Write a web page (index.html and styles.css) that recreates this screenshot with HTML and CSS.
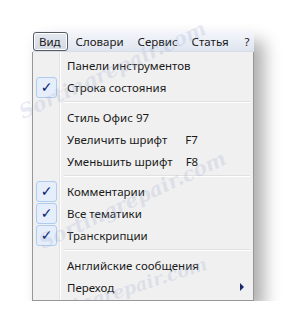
FILE: index.html
```html
<!DOCTYPE html>
<html lang="ru">
<head>
  <meta charset="UTF-8" />
  <title>Меню Вид</title>
  <link rel="stylesheet" href="styles.css">
</head>
<body>
  <div class="window">
    <div class="menubar">
      <span class="top-item active">Вид</span>
      <span class="top-item">Словари</span>
      <span class="top-item">Сервис</span>
      <span class="top-item">Статья</span>
      <span class="top-item">?</span>
    </div>

    <div class="dropdown">
      <div class="item"><span class="gutter"></span><span class="label">Панели инструментов</span></div>
      <div class="item"><span class="gutter"><span class="check">&#10003;</span></span><span class="label">Строка состояния</span></div>
      <div class="sep"></div>
      <div class="item"><span class="gutter"></span><span class="label">Стиль Офис 97</span></div>
      <div class="item"><span class="gutter"></span><span class="label">Увеличить шрифт</span><span class="key k7">F7</span></div>
      <div class="item"><span class="gutter"></span><span class="label">Уменьшить шрифт</span><span class="key k8">F8</span></div>
      <div class="sep"></div>
      <div class="item"><span class="gutter"><span class="check">&#10003;</span></span><span class="label">Комментарии</span></div>
      <div class="item"><span class="gutter"><span class="check">&#10003;</span></span><span class="label">Все тематики</span></div>
      <div class="item"><span class="gutter"><span class="check">&#10003;</span></span><span class="label">Транскрипции</span></div>
      <div class="sep"></div>
      <div class="item"><span class="gutter"></span><span class="label">Английские сообщения</span></div>
      <div class="item"><span class="gutter"></span><span class="label">Переход</span>
        <svg class="arrow" width="5" height="8" viewBox="0 0 5 8"><path d="M0 0 L4 4 L0 8 Z" fill="#1c2a6b"/></svg>
      </div>
    </div>

    <div class="watermark wm1">Sortingrepair.com</div>
    <div class="watermark wm2">Sortingrepair.com</div>
    <div class="watermark wm3">Sortingrepair.com</div>
  </div>
</body>
</html>
```

FILE: styles.css
```css
* {
  margin: 0;
  padding: 0;
  box-sizing: border-box;
}

body {
  background: #ffffff;
  font-family: 'Noto Sans', 'Open Sans', sans-serif;
  font-size: 11.5px;
  color: #1a1a1a;
  padding: 31px 0 0 32px;
}

.window {
  position: relative;
  width: 222px;
  box-shadow: 10px 10px 16px rgba(0, 0, 0, 0.32);
}

.menubar {
  display: flex;
  align-items: center;
  height: 21px;
  margin-left: 1px;
  background: linear-gradient(#f4f6fb, #dfe5f0);
  border-bottom: 1px solid #d8dce4;
}

.top-item {
  height: 19px;
  line-height: 17px;
  padding: 0 5px;
  margin-right: 2px;
  border: 1px solid transparent;
}

.top-item.active {
  padding: 0 6px 0 5px;
  border-color: #555a63;
  border-radius: 3px;
  background: linear-gradient(#e4e8ef, #d3d9e3);
  box-shadow: inset 0 0 0 1px #ffffff;
}

.top-item:last-child { margin-left: 2px; }

.dropdown {
  background: #f0f0f0;
  border: 1px solid #979797;
  border-top: none;
  padding: 2px;
  background-image: linear-gradient(90deg, transparent 26px, #e2e3e3 26px, #e2e3e3 27px, #ffffff 27px, #ffffff 28px, transparent 28px);
}

.item {
  display: flex;
  align-items: center;
  height: 22px;
  position: relative;
}

.gutter {
  width: 32px;
  height: 22px;
  display: flex;
  align-items: center;
  padding-left: 1px;
}

.check {
  display: flex;
  align-items: center;
  justify-content: center;
  width: 21px;
  height: 21px;
  border: 1px solid #aeccf0;
  border-radius: 3px;
  background: #e5eefa;
  color: #0c1a73;
  font-family: 'DejaVu Sans', sans-serif;
  font-size: 14px;
}

.label {
  white-space: nowrap;
}

.key.k7 { margin-left: 18px; }
.key.k8 { margin-left: 13px; }

.arrow {
  position: absolute;
  left: 205px;
  top: 7px;
}

.sep {
  height: 8px;
  margin-left: 29px;
  margin-right: 1px;
  background: linear-gradient(transparent 3px, #e0e0e0 3px, #e0e0e0 4px, #ffffff 4px, #ffffff 5px, transparent 5px);
}

.watermark {
  position: absolute;
  font-family: 'DejaVu Serif', serif;
  font-style: italic;
  font-weight: bold;
  font-size: 20px;
  color: rgba(150, 165, 205, 0.22);
  transform: rotate(-25deg);
  transform-origin: left center;
  white-space: nowrap;
  pointer-events: none;
}

.wm1 { left: -12px; top: 70px; }
.wm2 { left: 8px; top: 200px; }
.wm3 { left: 0; top: 278px; font-size: 18px; transform: rotate(-18deg); }
```
